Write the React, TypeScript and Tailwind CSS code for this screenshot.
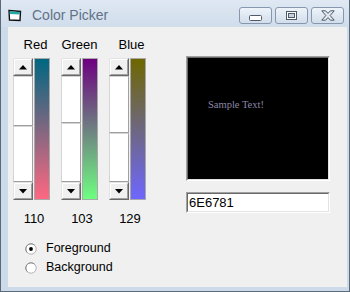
import type { ReactNode } from "react";

const channels = [
  { label: "Red", value: 110, upper: 50, from: "#006781", to: "#ff6781", labelPad: "pl-[8px]" },
  { label: "Green", value: 103, upper: 47, from: "#6e0081", to: "#6eff81", labelPad: "pl-0" },
  { label: "Blue", value: 129, upper: 57, from: "#6e6700", to: "#6e67ff", labelPad: "pl-[8px]" },
];

function Raised({ children, className = "" }: { children?: ReactNode; className?: string }) {
  return (
    <div className={`border border-t-[#e3e3e3] border-l-[#e3e3e3] border-r-[#696969] border-b-[#696969] ${className}`}>
      <div className="flex h-full w-full items-center justify-center border border-t-white border-l-white border-r-[#a0a0a0] border-b-[#a0a0a0] bg-[#f0f0f0]">
        {children}
      </div>
    </div>
  );
}

function Arrow({ down }: { down?: boolean }) {
  return (
    <svg width="8" height="5" viewBox="0 0 8 5">
      <polygon points={down ? "0,0 8,0 4,4.5" : "4,0 8,4.5 0,4.5"} fill="#000" />
    </svg>
  );
}

function ScrollBar({ upper }: { upper: number }) {
  return (
    <div className="flex w-[20px] flex-col">
      <Raised className="h-[18px]">
        <Arrow />
      </Raised>
      <div
        className="border border-[#d4d4d4] border-r-[#a0a0a0] border-b-[#a0a0a0] bg-white"
        style={{ height: upper }}
      />
      <div className="flex-1 border border-[#d4d4d4] border-r-[#a0a0a0] border-b-[#a0a0a0] bg-white" />
      <Raised className="h-[18px]">
        <Arrow down />
      </Raised>
    </div>
  );
}

function Radio({ checked, label }: { checked?: boolean; label: string }) {
  return (
    <div className="flex h-[19px] items-center">
      <svg width="12" height="12" viewBox="0 0 12 12" className="ml-[12px]">
        <circle cx="6" cy="6" r="5.2" fill="#fff" stroke="#b4b4b4" strokeWidth="1" />
        <path d="M2.3 9.7 A5.2 5.2 0 0 1 9.7 2.3" fill="none" stroke="#8a8a8a" strokeWidth="1" />
        {checked && <circle cx="6" cy="6" r="1.9" fill="#000" />}
      </svg>
      <span className="ml-[9px] text-[12.5px] text-black">{label}</span>
    </div>
  );
}

export default function App() {
  return (
    <div
      className="flex h-[292px] w-[350px] flex-col border-x border-b border-[#5b6a7b] bg-[#cddaea]"
      style={{ fontFamily: '"Liberation Sans", Arial, sans-serif' }}
    >
      {/* title bar */}
      <div className="flex h-[27px] bg-gradient-to-b from-[#dfe8f3] to-[#d0ddeb] pl-[7px]">
        <div className="flex items-center pt-[3px]">
          <svg width="14" height="13" viewBox="0 0 14 13">
            <path d="M1 1.5 L12.5 2.5 L12 11.5 L1.5 11 Z" fill="#fff" stroke="#111" strokeWidth="1.4" />
            <path d="M1.7 2.2 L12 3 L11.9 5.5 L1.8 5 Z" fill="#27a8a4" />
          </svg>
          <span className="ml-[10px] text-[14px] text-[#627287]">Color Picker</span>
        </div>
        <div className="ml-auto mr-[5px] mt-[7px] flex gap-[3px] self-start">
          <div className="flex h-[17px] w-[33px] items-center justify-center rounded-[3px] border border-[#8797ad] bg-gradient-to-b from-[#eef3f9] to-[#d2deeb]">
            <svg width="13" height="6" viewBox="0 0 13 6" className="mt-[5px]">
              <rect x="0.5" y="0.5" width="12" height="5" rx="1" fill="#fff" stroke="#4c5a6b" />
            </svg>
          </div>
          <div className="flex h-[17px] w-[33px] items-center justify-center rounded-[3px] border border-[#8797ad] bg-gradient-to-b from-[#eef3f9] to-[#d2deeb]">
            <svg width="11" height="9" viewBox="0 0 11 9">
              <rect x="0.5" y="0.5" width="10" height="8" fill="#fff" stroke="#4c5a6b" />
              <rect x="2.5" y="2.5" width="6" height="4" fill="#c7d1dd" stroke="#4c5a6b" />
            </svg>
          </div>
          <div className="flex h-[17px] w-[33px] items-center justify-center rounded-[3px] border border-[#8797ad] bg-gradient-to-b from-[#eef3f9] to-[#d2deeb]">
            <svg width="14" height="11" viewBox="0 0 14 11">
              <path
                d="M0.8 0.8 L4.6 0.8 L7 3.4 L9.4 0.8 L13.2 0.8 L9.2 5.5 L13.2 10.2 L9.4 10.2 L7 7.6 L4.6 10.2 L0.8 10.2 L4.8 5.5 Z"
                fill="#e4e8ec"
                stroke="#4c5a6b"
                strokeWidth="1"
                strokeLinejoin="round"
              />
            </svg>
          </div>
        </div>
      </div>

      {/* client area */}
      <div className="mb-[4px] ml-[7px] mr-[2px] flex flex-1 bg-[#f0f0f0]">
        <div className="flex w-[138px] flex-col pl-[5px]">
          <div className="mt-[10px] flex h-[15px] gap-[11px] text-[13px] leading-[15px] text-black">
            {channels.map((c) => (
              <div key={c.label} className={`w-[37px] text-center ${c.labelPad}`}>
                {c.label}
              </div>
            ))}
          </div>
          <div className="mt-[6px] flex h-[142px] gap-[11px]">
            {channels.map((c) => (
              <div key={c.label} className="flex w-[37px] gap-[1px]">
                <ScrollBar upper={c.upper} />
                <div
                  className="w-[16px] border border-[#a8a8a8]"
                  style={{ backgroundImage: `linear-gradient(to bottom, ${c.from}, ${c.to})` }}
                />
              </div>
            ))}
          </div>
          <div className="mt-[11px] flex h-[15px] gap-[11px] text-[13px] leading-[15px] text-black">
            {channels.map((c) => (
              <div key={c.label} className="w-[37px] pl-[5px] text-center">
                {c.value}
              </div>
            ))}
          </div>
          <div className="mt-[13px] flex flex-col">
            <Radio checked label="Foreground" />
            <Radio label="Background" />
          </div>
        </div>

        <div className="ml-[40px] flex w-[144px] flex-col pt-[29px]">
          <div className="h-[125px] border border-t-[#a0a0a0] border-l-[#a0a0a0] border-r-white border-b-white">
            <div className="h-full border border-t-[#696969] border-l-[#696969] border-r-[#e3e3e3] border-b-[#e3e3e3] bg-black pl-[20px] pt-[33px]">
              <span
                className="text-[10.5px] text-[#8c86a6]"
                style={{ fontFamily: '"Liberation Serif", "Times New Roman", serif' }}
              >
                Sample Text!
              </span>
            </div>
          </div>
          <div className="mt-[11px] h-[21px] border border-t-[#a0a0a0] border-l-[#a0a0a0] border-r-white border-b-white">
            <div className="flex h-full items-center border border-t-[#696969] border-l-[#696969] border-r-[#e3e3e3] border-b-[#e3e3e3] bg-white pl-[1px] text-[13px] text-black">
              6E6781
            </div>
          </div>
        </div>
      </div>
    </div>
  );
}
